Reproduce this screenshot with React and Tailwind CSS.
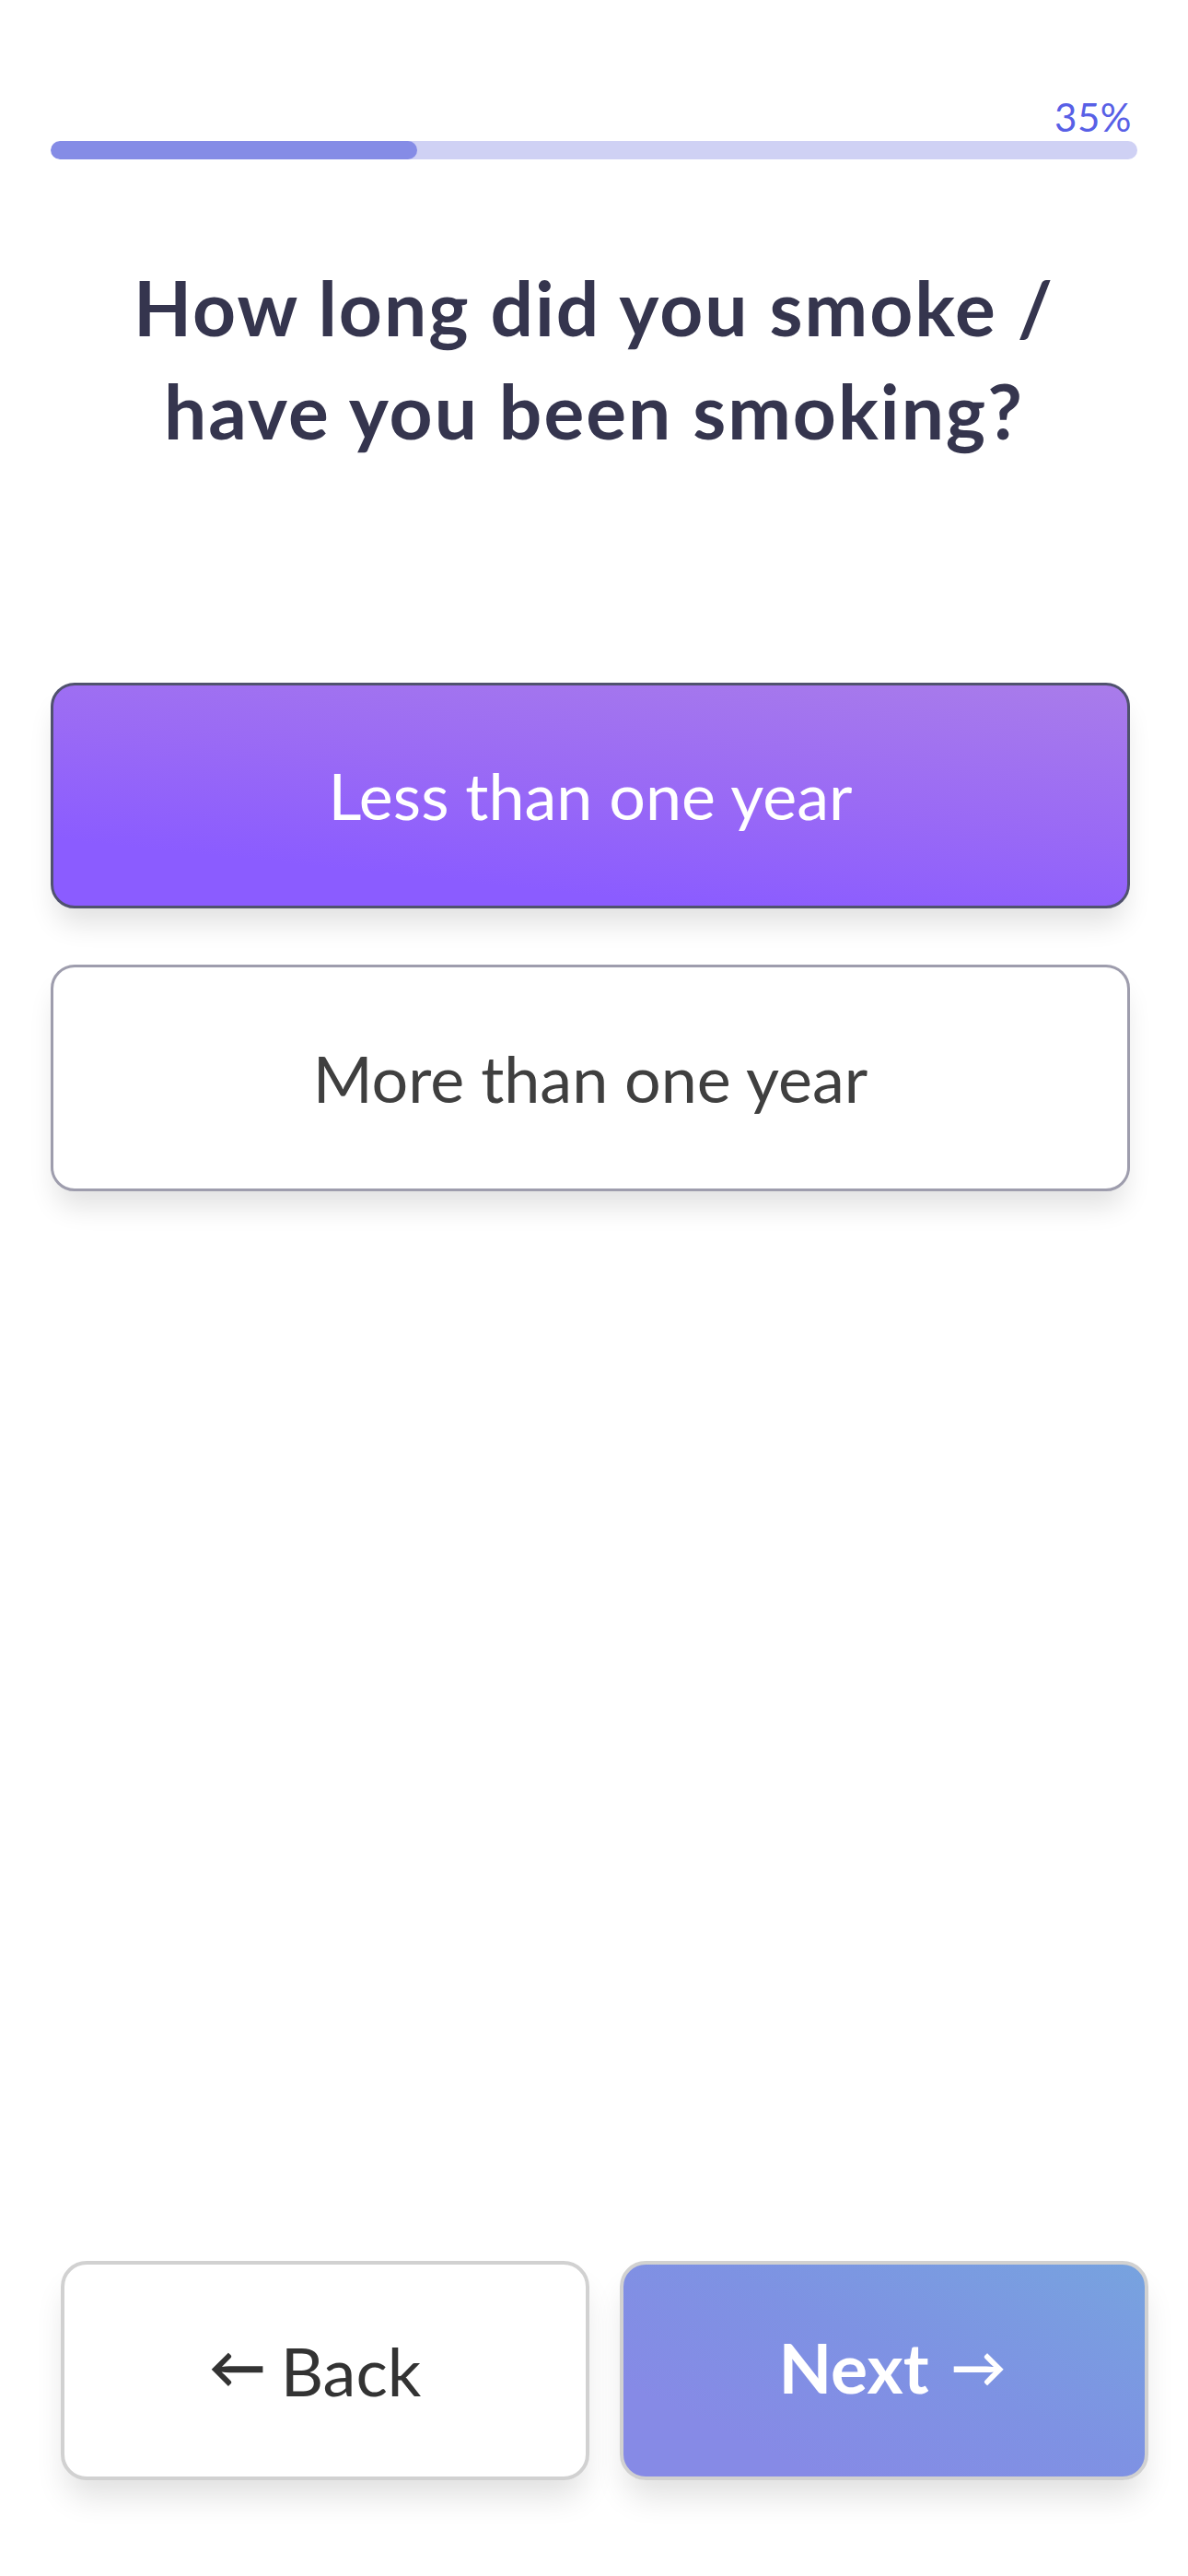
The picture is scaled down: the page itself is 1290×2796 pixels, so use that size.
import React from "react";

export default function App() {
  return (
    <div className="w-full min-h-[2796px] bg-white flex flex-col font-['Lato','Noto_Sans',sans-serif]">
      {/* Progress */}
      <div className="pl-[55px] pr-[55px] pt-[104px]">
        <div className="flex justify-end pr-[6px]">
          <span className="text-[42px] leading-[46px] font-normal text-[#5860e6] tracking-[0.5px]">35%</span>
        </div>
        <div className="mt-[3px] h-[20px] w-full rounded-full bg-[#cfd1f4] overflow-hidden">
          <div className="h-full w-[398px] rounded-full bg-[#858ce6]" />
        </div>
      </div>

      {/* Title */}
      <h1 className="mt-[104px] px-[40px] text-center text-[82px] leading-[112px] tracking-[2px] font-bold text-[#35354e]">
        How long did you smoke /<br />have you been smoking?
      </h1>

      {/* Options */}
      <div className="mt-[240px] pl-[55px] pr-[63px] flex flex-col gap-[61px]">
        <button className="h-[245px] w-full rounded-[26px] border-[3px] border-[#50526e] bg-[linear-gradient(186deg,#a97cea_0%,#9a6af5_45%,#8b5cff_80%)] text-white text-[70px] font-normal shadow-[0_22px_30px_-6px_rgba(0,0,0,0.12)]">
          Less than one year
        </button>
        <button className="h-[246px] w-full rounded-[26px] border-[3px] border-[#9e9dad] bg-white text-[#3f3f3f] text-[70px] font-normal shadow-[0_22px_30px_-6px_rgba(0,0,0,0.12)]">
          More than one year
        </button>
      </div>

      <div className="flex-1" />

      {/* Nav */}
      <div className="pl-[66px] pb-[104px] flex gap-[33px]">
        <button className="w-[574px] shrink-0 h-[238px] rounded-[28px] border-[4px] border-[#d1d1d1] bg-white text-[#333333] text-[72px] font-normal flex items-center justify-center gap-[16px] pr-[22px] shadow-[0_24px_34px_-6px_rgba(0,0,0,0.12)]">
          <span className="text-[62px] font-bold leading-none -mt-[10px]">←</span>
          <span className="leading-none">Back</span>
        </button>
        <button className="w-[574px] shrink-0 h-[238px] rounded-[28px] border-[4px] border-[#d1d1d1] bg-[linear-gradient(205deg,#77a3df_0%,#7e92e3_45%,#868ae6_80%)] text-white text-[75px] font-bold flex items-center justify-center gap-[24px] pl-[18px] shadow-[0_24px_34px_-6px_rgba(0,0,0,0.12)]">
          <span className="leading-none -mt-[8px]">Next</span>
          <span className="text-[60px] leading-none -mt-[10px]">→</span>
        </button>
      </div>
    </div>
  );
}
